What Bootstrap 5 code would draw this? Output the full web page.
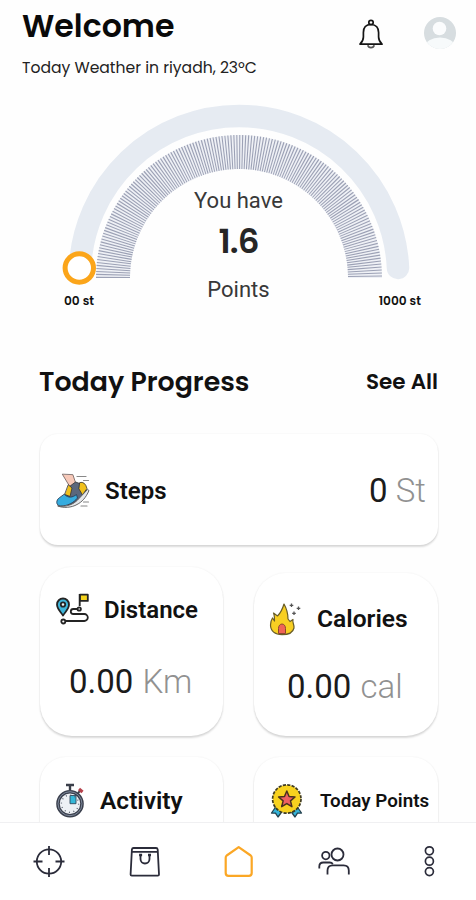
<!DOCTYPE html>
<html lang="en">
<head>
<meta charset="utf-8">
<meta name="viewport" content="width=device-width, initial-scale=1">
<title>Welcome</title>
<link href="https://cdn.jsdelivr.net/npm/bootstrap@5.3.0/dist/css/bootstrap.min.css" rel="stylesheet">
<style>
body{font-family:Roboto,"Liberation Sans",sans-serif;background:#fefefe;color:#111}
.geo{font-family:Poppins,Inter,sans-serif}
.app{width:476px;height:900px}
.app *{white-space:nowrap}
.top-bar{height:96px;padding:9px 19px 0 22px}
.hello{font-size:31.6px;font-weight:600;line-height:34px;color:#0a0a0a}
.weather{font-size:15.6px;line-height:20px;margin-top:15px;color:#222}
.bell{margin:10px 39px 0 0}
.avatar{margin-top:7px}
.gauge{height:226px}
.gauge-text{left:1px;right:0;top:92px}
.have{font-size:22px;line-height:26px;color:#383838}
.score{font-size:34px;font-weight:600;line-height:40px;margin-top:7px;color:#262626;letter-spacing:-1px}
.pts{margin-top:16px}
.ends{font-size:12.200px;font-weight:600;line-height:16px;left:64px;right:55px;top:197px}
.heading{height:44px;margin-top:38px;padding:0 38px 0 39px}
.h-a{font-size:26.800px;font-weight:600}
.h-b{font-size:21.500px;font-weight:600}
.tile{background:#fff;box-shadow:0 2px 2px rgba(0,0,0,.14),0 0 2px rgba(0,0,0,.07)}
.steps{margin:30px 38px 0 40px;height:111px;border-radius:18px;padding:2px 12px 0 15px}
.name{font-size:24px;font-weight:600;line-height:36px;margin-left:14px}
.val{font-size:33px;line-height:40px;color:#1b1b1b}
.steps .val{padding-top:1px}
.unit{color:#919191;font-weight:350}
.tiles{margin:22px 38px 0 40px;display:grid;grid-template-columns:183px 184px;column-gap:31px}
.big{border-radius:32px}
.big .unit{margin-left:1px}
.dist{height:169px;padding:25px 0 0 15px}
.dist .name{margin-left:13px}
.dist .val{margin:34px 0 0 14px}
.calo{height:163px;margin-top:6px;padding:28px 0 0 13px}
.calo .name{font-size:24.600px}
.calo .val{margin:30px 0 0 20px}
.cut{height:120px;margin-top:21px;border-radius:26px;padding:26px 0 0 13px}
.cut .name{font-size:24.500px;margin-left:11px}
.cut .sm-name{font-size:18.800px;margin-left:15px}
.bottom{height:78px;background:#fff;border-top:1px solid #f0f0f2;padding:20px 0 0 1px}
svg{display:block;flex:none}
</style>
</head>
<body>
<div class="app d-flex flex-column overflow-hidden position-relative">
<header class="top-bar d-flex justify-content-between flex-shrink-0">
  <div class="geo"><div class="hello">Welcome</div><div class="weather">Today Weather in riyadh, 23ºC</div></div>
  <div class="d-flex align-items-start">
    <svg class="bell" width="26" height="34" viewBox="0 0 26 34" fill="none" stroke="#151515" stroke-width="1.700" stroke-linejoin="round"><circle cx="13" cy="3.500" r="2.200"/><path d="M13 5.500c-5.200 0-7.600 3.400-7.600 8v4.500c0 2.800-.9 4.600-3.400 7.200h22c-2.500-2.600-3.400-4.400-3.400-7.200v-4.500c0-4.600-2.400-8-7.600-8z"/><path d="M9.800 26.200c.4 1.600 1.700 2.400 3.200 2.400s2.800-.8 3.200-2.400" stroke="#555"/></svg>
    <svg class="avatar" width="34" height="34" viewBox="0 0 34 34"><defs><clipPath id="av"><circle cx="17" cy="17" r="16"/></clipPath></defs><g clip-path="url(#av)"><rect width="34" height="34" fill="#d7dde0"/><circle cx="16.500" cy="12.500" r="6.800" fill="#fbfcfd"/><ellipse cx="17" cy="31" rx="15" ry="9.500" fill="#f7fafb"/></g></svg>
  </div>
</header>

<section class="gauge position-relative flex-shrink-0">
  <svg width="476" height="200" viewBox="0 96 476 200" fill="none">
    <path d="M80 268A159.160 159.160 0 0 1 398 268" stroke="#e6ebf2" stroke-width="22.500" stroke-linecap="round"/>
    <path d="M113 278A126 126 0 0 1 365 278" stroke="#eff1f6" stroke-width="34"/>
    <path d="M113 278A126 126 0 0 1 365 278" stroke="#9ca1b5" stroke-width="34" stroke-dasharray="1.080 1.560"/>
    <circle cx="79.300" cy="268" r="14.200" fill="#fff" stroke="#fba51a" stroke-width="5"/>
  </svg>
  <div class="gauge-text position-absolute text-center">
    <div class="have">You have</div>
    <div class="score geo">1.6</div>
    <div class="have pts">Points</div>
  </div>
  <div class="ends geo position-absolute d-flex justify-content-between"><span>00 st</span><span>1000 st</span></div>
</section>

<div class="heading d-flex justify-content-between align-items-center flex-shrink-0 geo"><span class="h-a">Today Progress</span><span class="h-b">See All</span></div>

<section class="steps tile d-flex align-items-center justify-content-between flex-shrink-0">
  <div class="d-flex align-items-center">
    <svg width="36" height="36" viewBox="0 0 36 36" stroke-linejoin="round" stroke-linecap="round">
      <path d="M7.500 1.500L15 14l6-3-3-9z" fill="#f7c9b9" stroke="#6b5a58" stroke-width=".8"/>
      <path d="M14.500 13.500l6-4.500 7 2.500 4 6-5 8-9 6-10-1z" fill="#5b677c" stroke="#333" stroke-width=".8"/>
      <path d="M25 9.500q5-1.500 7 6l-4.500 6.500-3.500-6z" fill="#f0c01c" stroke="#333" stroke-width=".8"/>
      <path d="M13.500 12l3.500 3-2 8.500-5-2z" fill="#f0c01c" stroke="#333" stroke-width=".8"/>
      <path d="M9.500 21.500c4 4 8 3 12 0l1 3.500c-4 5-10 8-17 8C.5 32.500 1 27 4 25z" fill="#35acdf" stroke="#2b4057" stroke-width=".9"/>
      <path d="M3 33c8 1.500 16-1.500 21-7.500l8.500-9 1.500 1c-3 7-7 11.500-12 14-5 3-14 4-19 1.500z" fill="#e5e7ea" stroke="#555" stroke-width=".9"/>
      <path d="M22 3.500h9M28.500 7.500h5M28.500 29h5M26 33h6" stroke="#888" stroke-width="1.200"/>
    </svg>
    <span class="name">Steps</span>
  </div>
  <div class="val">0 <span class="unit">St</span></div>
</section>

<section class="tiles flex-shrink-0">
  <div class="dist tile big">
    <div class="d-flex align-items-center">
      <svg width="36" height="36" viewBox="0 0 36 36" fill="none" stroke="#242424" stroke-width="1.800" stroke-linejoin="round">
        <path d="M8 23.500C5.500 19.500 2 17 2 12.500a6 6 0 0 1 12 0C14 17 10.500 19.500 8 23.500z" fill="#3eb5d9"/><circle cx="8" cy="12.500" r="2.200" fill="#eaf7fb"/>
        <path d="M24.700 14V2" stroke-width="1.900"/><path d="M25 2.700h7.800v6.200H25z" fill="#f4d31d"/>
        <circle cx="24.200" cy="17" r="1.700"/><path d="M22.300 17h-4a2.500 2.500 0 0 0 0 5h11a3.500 3.500 0 0 1 0 7H10.500"/><circle cx="8.300" cy="29.500" r="2"/>
      </svg>
      <span class="name">Distance</span>
    </div>
    <div class="val">0.00 <span class="unit">Km</span></div>
  </div>
  <div class="calo tile big">
    <div class="d-flex align-items-center">
      <svg width="36" height="36" viewBox="0 0 36 36" stroke-linejoin="round">
        <path d="M15 33.700C8 33.700 3.500 30 3.500 24c0-3 1-5.500 2-7l2 3c0-4 0-6-1-8l4 3c2-2 5-7 6.500-12 2 3.500 4 8.500 4 15l2 2.500 3-2c-1 3 1.500 5 1 8.500-1 4.500-5.500 6.700-12 6.700z" fill="#f8cf22" stroke="#695d27" stroke-width="1.200"/>
        <path d="M11.500 32.500v-5c0-6 7-6 7 0v5z" fill="#f06456" stroke="#8c4530" stroke-width="1"/>
        <g stroke="#555" stroke-width="1.300"><path d="M24.500 2.500v3.600m-1.800-1.800h3.600M31.500 5.500v3.600m-1.800-1.800h3.600M27 10.500v3.600m-1.800-1.800h3.600"/></g>
      </svg>
      <span class="name">Calories</span>
    </div>
    <div class="val">0.00 <span class="unit">cal</span></div>
  </div>
  <div class="cut tile">
    <div class="d-flex align-items-center">
      <svg width="36" height="36" viewBox="0 0 36 36" fill="none">
        <path d="M13 2h8M17 2v5" stroke="#3a3f4a" stroke-width="2.400"/><path d="M25 10l2.500-2.500" stroke="#3a3f4a" stroke-width="2"/><path d="M26 6l3.500 3" stroke="#b5404a" stroke-width="3.200"/>
        <circle cx="17" cy="20.700" r="12" fill="#eef1f5" stroke="#3a3f4c" stroke-width="3.600"/><circle cx="17" cy="20.700" r="12" stroke="#8793a6" stroke-width=".9"/>
        <path d="M17 20.700V12.500h6v8.200z" fill="#35b8d8" stroke="#2f4b5d" stroke-width=".9"/>
        <circle cx="17" cy="20.700" r="8.600" stroke="#59606e" stroke-width="1.300" stroke-dasharray="1 3.500"/>
      </svg>
      <span class="name">Activity</span>
    </div>
  </div>
  <div class="cut tile">
    <div class="d-flex align-items-center">
      <svg width="38" height="36" viewBox="0 0 38 36" stroke-linejoin="round">
        <path d="M9 23.500L4.500 30l4 .2L11 34l5-7zM30 23.500l4.500 6.500-4 .2L28 34l-5-7z" fill="#35b4da" stroke="#24424f" stroke-width="1.300"/>
        <circle cx="19.800" cy="16" r="14" fill="#f8d21f"/>
        <circle cx="19.800" cy="16" r="14.200" fill="none" stroke="#3f3a20" stroke-width="1.700" stroke-dasharray="3.200 1.260"/>
        <path d="M19.800 8l2.300 5.500 5.900.5-4.500 3.900 1.400 5.800-5.100-3.100-5.100 3.100 1.400-5.800-4.500-3.900 5.900-.5z" fill="#ee6262" stroke="#49331d" stroke-width="1.500"/>
      </svg>
      <span class="name sm-name">Today Points</span>
    </div>
  </div>
</section>

<nav class="bottom position-absolute bottom-0 start-0 w-100 d-flex" aria-label="Main">
  <a class="flex-fill d-flex justify-content-center" href="#" aria-label="Explore"><svg width="36" height="36" viewBox="0 0 36 36" fill="none" stroke="#2b2c3a" stroke-width="1.800"><circle cx="18" cy="18.500" r="12.200"/><path d="M18 3v9M18 25v9M2.500 18.500h9M24.500 18.500h9"/></svg></a>
  <a class="flex-fill d-flex justify-content-center" href="#" aria-label="Store"><svg width="36" height="36" viewBox="0 0 36 36" fill="none" stroke="#2b2c3a" stroke-width="1.800" stroke-linejoin="round"><path d="M7.500 5H30q1.500 0 1.700 1.500l1.300 25q0 1.200-1.200 1.200h-26q-1.200 0-1.200-1.200l1.300-25Q6.200 5 7.500 5z"/><path d="M6 8.800h25.500M14.500 12v4c0 6 9 6 9 0v-4"/><path d="M13.100 12h3M22 12h3" stroke-width="2.400"/></svg></a>
  <a class="flex-fill d-flex justify-content-center" href="#" aria-label="Home"><svg width="36" height="36" viewBox="0 0 36 36" fill="none" stroke="#fba725" stroke-width="2.200" stroke-linejoin="round"><path d="M17.700 4.200l12 8.300q1 .8 1 2.200V30q0 2.800-2.800 2.800h-20.400q-2.800 0-2.800-2.800V14.700q0-1.400 1-2.200z"/></svg></a>
  <a class="flex-fill d-flex justify-content-center" href="#" aria-label="Friends"><svg width="36" height="36" viewBox="0 0 36 36" fill="none" stroke="#2b2c3a" stroke-width="1.800"><circle cx="21.500" cy="11.500" r="6"/><circle cx="9.800" cy="12.600" r="3.700"/><path d="M11.500 31.500v-4q0-5.200 5.200-5.200h10.900q5.200 0 5.200 5.200v4M3.300 25.500v-2q0-4 4-4h6.500q2 0 3 1.500"/></svg></a>
  <a class="flex-fill d-flex justify-content-center" href="#" aria-label="More"><svg width="36" height="36" viewBox="0 0 36 36" fill="none" stroke="#2b2c3a" stroke-width="1.700"><circle cx="18.400" cy="7.800" r="4"/><circle cx="18.400" cy="18.200" r="4"/><circle cx="18.400" cy="28.600" r="4"/></svg></a>
</nav>
</div>
<script src="https://cdn.jsdelivr.net/npm/bootstrap@5.3.0/dist/js/bootstrap.bundle.min.js"></script>
</body>
</html>
